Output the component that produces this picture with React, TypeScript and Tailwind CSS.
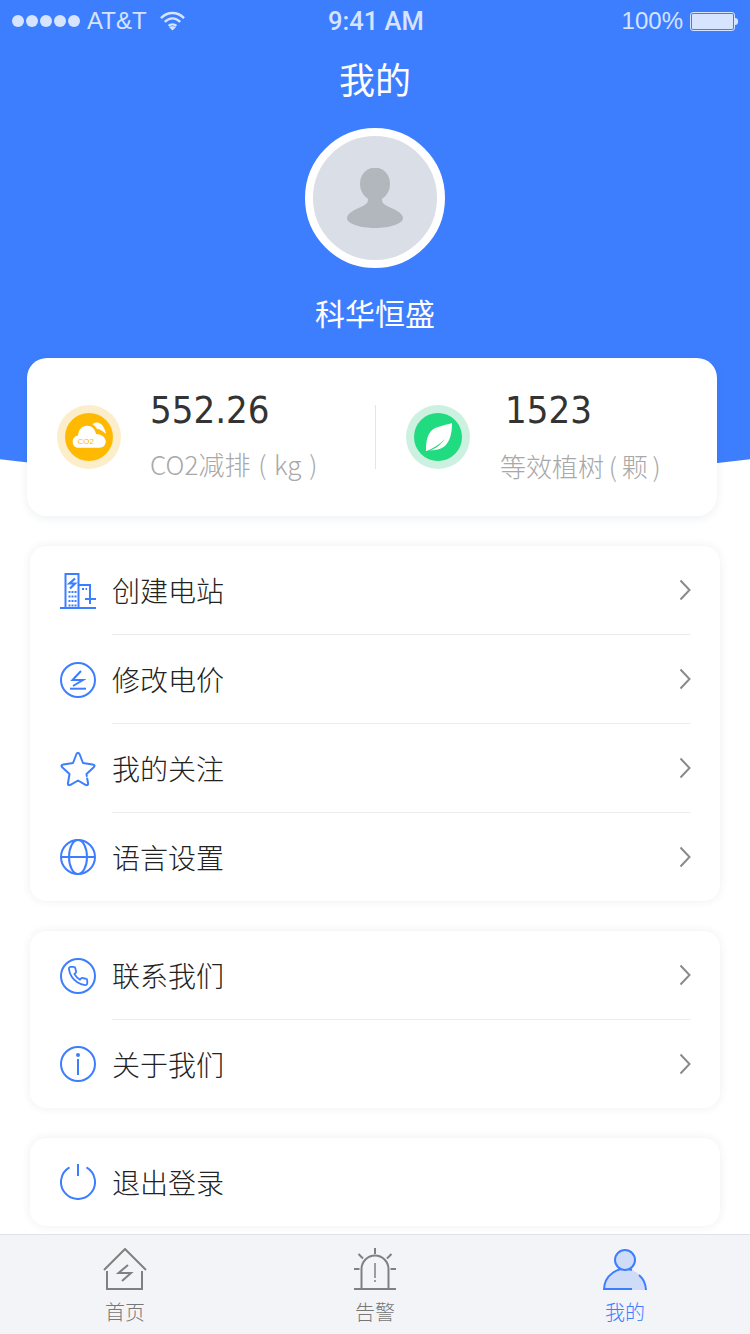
import type React from "react";

const CJK = "font-['Noto_Sans_CJK_SC','Noto_Sans',sans-serif]";

const Chevron = () => (
	<svg className="-mr-px" width="12" height="22" viewBox="0 0 12 22" fill="none" stroke="#8a8a8a" strokeWidth="2">
		<path d="M1.500 1.500 10.500 11 1.500 20.500" />
	</svg>
);

const ICON_PROPS = {
	width: 36,
	height: 36,
	viewBox: "0 0 36 36",
	fill: "none",
	stroke: "#3d7eff",
	strokeWidth: 2,
};

const BuildingIcon = () => (
	<svg {...ICON_PROPS} className="overflow-visible">
		<path d="M0 35H36M5.500 35V1H18.500V35M18.500 12H30V21" />
		<path d="M25 26H36M30 21V31" />
		<path d="M15 5.500 9.500 10.500H15L10 15.500" strokeWidth="2.200" />
		<path d="M9.500 18V34M12.500 18V34M15.500 18V34" strokeDasharray="2 2.500" />
		<path d="M22 16H27" strokeDasharray="2 1.500" />
	</svg>
);

const ZapIcon = () => (
	<svg {...ICON_PROPS}>
		<circle cx="18" cy="18" r="17" />
		<path d="M21 9 12.500 18H23L13 24" />
		<path d="M10 26.700H26" />
	</svg>
);

const StarIcon = () => (
	<svg {...ICON_PROPS} strokeLinejoin="round" strokeLinecap="round">
		<path d="M27.200 27.500 28 32Q28.500 35 25.500 33.800L18 29.500 10.500 33.800Q7.500 35 8 32L9.500 23 2.500 16.500Q0 14 3.500 13.500L13 12 16.500 3Q18 .5 19.500 3L23 12 32.500 13.500Q36 14 33.500 16.500L26.500 23 26.800 25" />
	</svg>
);

const GlobeIcon = () => (
	<svg {...ICON_PROPS}>
		<circle cx="18" cy="18" r="17" />
		<ellipse cx="18" cy="18" rx="9" ry="17" />
		<path d="M1 18H35" />
	</svg>
);

const PhoneIcon = () => (
	<svg {...ICON_PROPS}>
		<circle cx="18" cy="18" r="17" />
		<path
			transform="translate(7 7) scale(0.92)"
			d="M22 16.920v3a2 2 0 0 1-2.180 2 19.790 19.790 0 0 1-8.630-3.070 19.500 19.500 0 0 1-6-6 19.790 19.790 0 0 1-3.070-8.670A2 2 0 0 1 4.110 2h3a2 2 0 0 1 2 1.720 12.840 12.840 0 0 0 .7 2.810 2 2 0 0 1-.45 2.110L8.090 9.910a16 16 0 0 0 6 6l1.270-1.270a2 2 0 0 1 2.110-.45 12.840 12.840 0 0 0 2.810.7A2 2 0 0 1 22 16.920z"
		/>
	</svg>
);

const InfoIcon = () => (
	<svg {...ICON_PROPS}>
		<circle cx="18" cy="18" r="17" />
		<circle cx="18" cy="9" r="2" fill="#3d7eff" stroke="none" />
		<path d="M18 13V29" />
	</svg>
);

const PowerIcon = () => (
	<svg {...ICON_PROPS}>
		<path d="M9.500 3.300A17 17 0 1 0 26.500 3.300" />
		<path d="M18 0V12" />
	</svg>
);

const HomeTabIcon = () => (
	<svg width="44" height="44" viewBox="0 0 44 44" fill="none" stroke="#808080" strokeWidth="2">
		<path d="M1 22 22 1 43 22" />
		<path d="M4 23V41H39V23" />
		<path d="M25 17 15.500 25H28L19 33" />
	</svg>
);

const AlarmTabIcon = () => (
	<svg width="44" height="44" viewBox="0 0 44 44" fill="none" stroke="#808080" strokeWidth="2">
		<path d="M1 41H43" />
		<path d="M8.500 41V21A13.500 13.500 0 0 1 35.500 21V41" />
		<path d="M22 0V6M5.500 6 10 10.500M38.500 6 34 10.500M1 21H6.500M37.500 21H43" />
		<path d="M22 15V30M22 32V34" strokeWidth="1.500" />
	</svg>
);

const MeTabIcon = () => (
	<svg width="44" height="44" viewBox="0 0 44 44" fill="none" stroke="#3d7eff" strokeWidth="2">
		<path d="M1 42A21 21 0 0 1 43 42Z" fill="#cfdcf8" stroke="none" />
		<path d="M1 42A21 21 0 0 1 29 22M36 27A21 21 0 0 1 43 42M1 41H29" />
		<circle cx="22" cy="12" r="10" fill="#cfdcf8" />
	</svg>
);

const AvatarFigure = () => (
	<svg width="56" height="60" viewBox="0 0 56 60" fill="#b2b6bd">
		<ellipse cx="28" cy="16" rx="15" ry="16.500" />
		<path d="M21 27H35V32C35 35 37 36 40 38 47 41 56 45 56 50 56 56 42 60 28 60 14 60 0 56 0 50 0 45 9 41 16 38 19 36 21 35 21 32Z" />
	</svg>
);

const Co2Badge = () => (
	<div className="flex size-16 shrink-0 items-center justify-center rounded-full bg-[#fdeecb]">
		<div className="flex size-12 items-center justify-center rounded-full bg-[#ffb900]">
			<svg width="48" height="48" viewBox="0 0 48 48">
				<path
					d="M13 34.700C9 34.700 7.700 31 7.700 28.500 7.700 25 10 23 13 22.500 13.500 16.500 17 12.700 22 12.700 27 12.700 30 16 31 21 36 21 40.700 24 40.700 28.500 40.700 32 38 34.700 34.500 34.700Z"
					fill="#fff"
				/>
				<path d="M27.500 11.500C29 9.500 32 9 34 10 37 11 40 15 41 21 38 18 35 16 32 16 31 14 29.500 12.500 27.500 11.500Z" fill="#fff" />
				<text x="20.700" y="30.700" textAnchor="middle" fontSize="8" fill="#ffb900" fontFamily="Liberation Sans, sans-serif">
					CO2
				</text>
			</svg>
		</div>
	</div>
);

const LeafBadge = () => (
	<div className="flex size-16 shrink-0 items-center justify-center rounded-full bg-[#cdf1e1]">
		<div className="flex size-12 items-center justify-center rounded-full bg-[#20db7f]">
			<svg width="48" height="48" viewBox="0 0 48 48">
				<path d="M38 10C30 13 19 13 15 21 12 27 12 33 12 38 17 37 25 38 31 33 37 27 38 18 38 10Z" fill="#fff" />
				<path d="M12 38.500C18 36 25 32 31 26 26 33 19 37 13 39Z" fill="#20db7f" />
			</svg>
		</div>
	</div>
);

const MenuRow: React.FC<{
	icon: React.ReactNode;
	label: string;
	last?: boolean;
	arrow?: boolean;
}> = ({ icon, label, last, arrow = true }) => (
	<div className="flex items-stretch pl-[30px] pr-[30px]">
		<div className="flex w-9 shrink-0 items-center">{icon}</div>
		<div
			className={`ml-4 flex flex-1 items-center justify-between ${last ? "h-[88px]" : "h-[89px] border-b border-[#ececec]"}`}
		>
			<span className={`${CJK} text-[28px] font-light leading-none text-[#222]`}>{label}</span>
			{arrow && <Chevron />}
		</div>
	</div>
);

const MenuCard: React.FC<{ children: React.ReactNode }> = ({ children }) => (
	<div className="ml-[30px] w-[690px] rounded-2xl bg-white shadow-[0_0_10px_rgba(30,50,90,0.08)]">
		{children}
	</div>
);

const TabItem: React.FC<{ icon: React.ReactNode; label: string; active?: boolean }> = ({
	icon,
	label,
	active,
}) => (
	<div className="flex flex-1 flex-col items-center pt-[13px]">
		{icon}
		<span className={`${CJK} mt-[5px] text-[20px] font-light leading-[30px] ${active ? "text-[#3d7eff]" : "text-[#777]"}`}>
			{label}
		</span>
	</div>
);

export default function App() {
	return (
		<div className="relative flex h-[1334px] w-[750px] flex-col overflow-hidden bg-white">
			<div className="flex h-[482px] flex-col items-center bg-[#3d7eff] [clip-path:ellipse(3100px_3100px_at_50%_-2618px)]">
				<div className="relative flex h-[42px] w-full items-center justify-between pl-3 pr-3 font-['Liberation_Sans',sans-serif] text-[24px] text-[#d6e4ff]">
					<div className="flex items-center">
						<div className="flex gap-0.5">
							<div className="size-3 rounded-full bg-[#d6e4ff]" />
							<div className="size-3 rounded-full bg-[#d6e4ff]" />
							<div className="size-3 rounded-full bg-[#d6e4ff]" />
							<div className="size-3 rounded-full bg-[#d6e4ff]" />
							<div className="size-3 rounded-full bg-[#d6e4ff]" />
						</div>
						<span className="ml-[7px]">AT&amp;T</span>
						<svg className="ml-[13px]" width="25" height="20" viewBox="0 0 26 20" fill="none" stroke="#d6e4ff" strokeWidth="2.500">
							<path d="M1 7C8 0 18 0 25 7M5 11C10 6 16 6 21 11M9 15C11 13 15 13 17 15" />
							<path d="M13 20 9.500 16.500C11 15 15 15 16.500 16.500Z" fill="#d6e4ff" stroke="none" />
						</svg>
					</div>
					<span className="absolute left-[328px] font-['Roboto',sans-serif] text-[25.500px] font-medium">9:41 AM</span>
					<div className="flex items-center">
						<span>100%</span>
						<div className="ml-[7px] h-[19px] w-[45px] rounded-[3px] border border-[#d6e4ff] p-px">
							<div className="h-full w-full rounded-[1px] bg-[#d6e4ff]" />
						</div>
						<div className="h-[7px] w-[3px] rounded-r-sm bg-[#d6e4ff]" />
					</div>
				</div>
				<h1 className={`${CJK} mt-[11px] text-[36px] font-normal leading-[50px] text-white`}>我的</h1>
				<div className="mt-[25px] flex size-[140px] items-center justify-center rounded-full border-8 border-white bg-[#dadee6]">
					<AvatarFigure />
				</div>
				<div className={`${CJK} mt-6 text-[30px] leading-10 text-white`}>科华恒盛</div>
			</div>

			<div className="relative z-10 ml-[27px] -mt-[124px] flex h-[158px] w-[690px] items-start rounded-[20px] bg-white shadow-[0_2px_10px_rgba(30,50,90,0.08)]">
				<div className="flex w-[348px] pl-[30px] pt-[47px]">
					<Co2Badge />
					<div className="ml-[29px] -mt-[47px]">
						<div className="mt-[26px] font-['DejaVu_Sans',sans-serif] text-[38px] font-stretch-condensed leading-[52px] text-[#333]">552.26</div>
						<div className={`${CJK} mt-[9px] whitespace-nowrap text-[26px] font-light leading-[38px] text-[#a8a8a8] [word-spacing:2px]`}>
							CO2减排 ( kg )
						</div>
					</div>
				</div>
				<div className="mt-[47px] h-16 w-px bg-[#e4e4e4]" />
				<div className="flex pl-[30px] pt-[47px]">
					<LeafBadge />
					<div className="ml-[30px] -mt-[47px]">
						<div className="ml-[5px] mt-[26px] font-['DejaVu_Sans',sans-serif] text-[38px] font-stretch-condensed leading-[52px] text-[#333]">1523</div>
						<div className={`${CJK} mt-[11px] whitespace-nowrap text-[26px] font-light leading-[38px] text-[#a8a8a8] [word-spacing:-1px]`}>
							等效植树 ( 颗 )
						</div>
					</div>
				</div>
			</div>

			<div className="mt-[30px] flex flex-col gap-[30px]">
				<MenuCard>
					<MenuRow icon={<BuildingIcon />} label="创建电站" />
					<MenuRow icon={<ZapIcon />} label="修改电价" />
					<MenuRow icon={<StarIcon />} label="我的关注" />
					<MenuRow icon={<GlobeIcon />} label="语言设置" last />
				</MenuCard>
				<MenuCard>
					<MenuRow icon={<PhoneIcon />} label="联系我们" />
					<MenuRow icon={<InfoIcon />} label="关于我们" last />
				</MenuCard>
				<MenuCard>
					<MenuRow icon={<PowerIcon />} label="退出登录" last arrow={false} />
				</MenuCard>
			</div>

			<div className="mt-auto flex h-[100px] border-t border-[#dfe2ea] bg-[#f3f4f8]">
				<TabItem icon={<HomeTabIcon />} label="首页" />
				<TabItem icon={<AlarmTabIcon />} label="告警" />
				<TabItem icon={<MeTabIcon />} label="我的" active />
			</div>
		</div>
	);
}
